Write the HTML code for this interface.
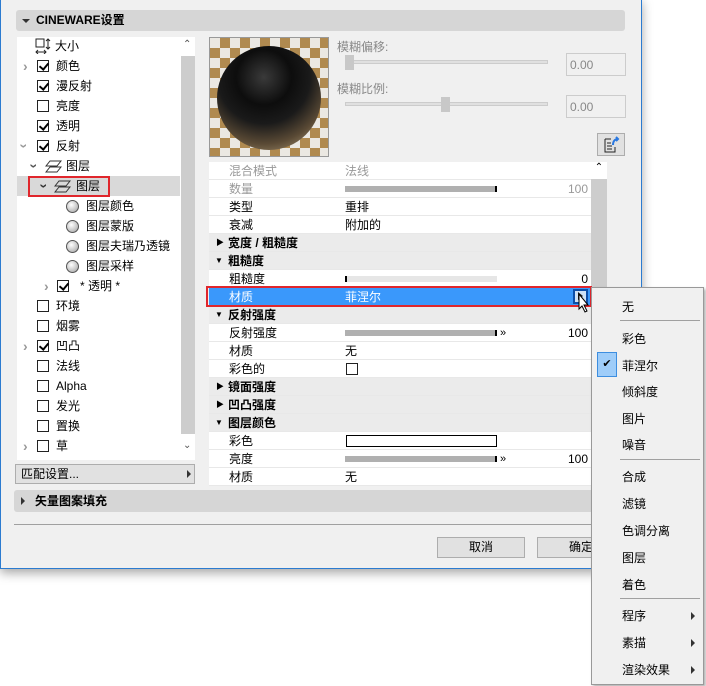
<!DOCTYPE html>
<html><head><meta charset="utf-8"><style>
*{box-sizing:border-box;margin:0;padding:0}
body{width:706px;height:686px;background:#fff;position:relative;overflow:hidden;font-family:"Liberation Sans","Noto Sans CJK SC",sans-serif;font-size:12px;color:#000}
.a{position:absolute}
.dlg{left:0;top:-2px;width:642px;height:571px;background:#f0f0f0;border:1px solid #2b7bd0;border-top:none;box-shadow:0 4px 10px rgba(0,0,0,.35)}
.bar{background:#d6d6d6;border-radius:3px;font-weight:bold;font-size:12px}
.tri{position:absolute;width:0;height:0}
.tree{left:17px;top:37px;width:163px;height:423px;background:#fff}
.vs{background:#cdcdcd}
.row{position:absolute;left:0;height:20px;line-height:20px;white-space:nowrap}
.cb{position:absolute;width:12px;height:12px;border:1px solid #222;background:#fff}
.cb.c::after{content:"";position:absolute;left:3px;top:0px;width:4px;height:7px;border:solid #000;border-width:0 2px 2px 0;transform:rotate(40deg)}
.rad{position:absolute;width:13px;height:13px;border-radius:50%;border:1px solid #555;background:radial-gradient(circle at 40% 35%,#fff,#bbb 70%,#888)}
.chev{position:absolute;color:#999;font-size:14px;font-weight:bold}
.pl{left:209px;top:162px;width:382px;height:323px;background:#fff}
.pr{position:absolute;left:0;width:382px;height:18px;line-height:18px;border-bottom:1px solid #e8e8e8}
.pr .k{position:absolute;left:20px}
.pr .v{position:absolute;left:136px}
.pr .n{position:absolute;right:3px}
.pr.h{background:#ebebeb;font-weight:bold}
.pr.h .k{left:19px}
.g{color:#999}
.sl{position:absolute;left:136px;top:6px;width:152px;height:6px;background:#b0b0b0;border-right:2px solid #000}
.sl.e{background:#e6e6e6;border-right:none;border-left:2px solid #000}
.btn{background:#e1e1e1;border:1px solid #adadad;text-align:center;line-height:19px}
.menu{left:591px;top:287px;width:113px;height:398px;background:#f0f0f0;border:1px solid #999;box-shadow:2px 2px 3px rgba(0,0,0,.3)}
.mi{position:absolute;left:30px;font-size:12px}
.sep{position:absolute;left:28px;width:80px;height:1px;background:#a0a0a0}
.arr{position:absolute;left:99px;width:0;height:0;border-left:4px solid #333;border-top:4px solid transparent;border-bottom:4px solid transparent}
</style></head><body>
<div class="a dlg"></div>
<div class="a bar" style="left:16px;top:10px;width:609px;height:21px;line-height:21px;padding-left:20px">CINEWARE设置</div>
<div class="tri a" style="left:22px;top:19px;border-top:4px solid #333;border-left:4px solid transparent;border-right:4px solid transparent"></div>
<div class="a tree">
 <div class="row" style="top:-1px;left:18px"><svg width="16" height="16" style="position:absolute;top:2px"><rect x="1" y="1" width="8" height="8" fill="none" stroke="#222"/><path d="M13 1v10M11 3l2-2 2 2M11 9l2 2 2-2M1 14h10M3 12l-2 2 2 2M9 12l2 2-2 2" stroke="#222" fill="none"/></svg><span style="position:absolute;left:20px">大小</span></div>
 <div class="row" style="top:19px;width:160px"><span class="chev" style="left:6px">›</span><span class="cb c" style="left:20px;top:4px"></span><span style="position:absolute;left:39px">颜色</span></div>
 <div class="row" style="top:39px"><span class="cb c" style="left:20px;top:4px"></span><span style="position:absolute;left:39px">漫反射</span></div>
 <div class="row" style="top:59px"><span class="cb" style="left:20px;top:4px"></span><span style="position:absolute;left:39px">亮度</span></div>
 <div class="row" style="top:79px"><span class="cb c" style="left:20px;top:4px"></span><span style="position:absolute;left:39px">透明</span></div>
 <div class="row" style="top:99px"><span class="chev" style="left:5px;transform:rotate(90deg)">›</span><span class="cb c" style="left:20px;top:4px"></span><span style="position:absolute;left:39px">反射</span></div>
 <div class="row" style="top:119px"><span class="chev" style="left:15px;transform:rotate(90deg);color:#555">›</span><svg class="a" style="left:28px;top:4px" width="17" height="13"><path d="M5 1h11L12 6H1zM5 7h11L12 12H1z" fill="none" stroke="#333"/></svg><span style="position:absolute;left:49px">图层</span></div>
 <div class="row" style="top:139px;width:163px;background:#d9d9d9"></div>
 <div class="a" style="left:11px;top:139px;width:82px;height:21px;border:2px solid #e0262c"></div>
 <div class="row" style="top:139px"><span class="chev" style="left:25px;transform:rotate(90deg);color:#333">›</span><svg class="a" style="left:37px;top:4px" width="17" height="13"><path d="M5 1h11L12 6H1zM5 7h11L12 12H1z" fill="none" stroke="#333"/></svg><span style="position:absolute;left:59px">图层</span></div>
 <div class="row" style="top:159px"><span class="rad" style="left:49px;top:4px"></span><span style="position:absolute;left:69px">图层颜色</span></div>
 <div class="row" style="top:179px"><span class="rad" style="left:49px;top:4px"></span><span style="position:absolute;left:69px">图层蒙版</span></div>
 <div class="row" style="top:199px"><span class="rad" style="left:49px;top:4px"></span><span style="position:absolute;left:69px">图层夫瑞乃透镜</span></div>
 <div class="row" style="top:219px"><span class="rad" style="left:49px;top:4px"></span><span style="position:absolute;left:69px">图层采样</span></div>
 <div class="row" style="top:239px"><span class="chev" style="left:27px">›</span><span class="cb c" style="left:40px;top:4px"></span><span style="position:absolute;left:63px">* 透明 *</span></div>
 <div class="row" style="top:259px"><span class="cb" style="left:20px;top:4px"></span><span style="position:absolute;left:39px">环境</span></div>
 <div class="row" style="top:279px"><span class="cb" style="left:20px;top:4px"></span><span style="position:absolute;left:39px">烟雾</span></div>
 <div class="row" style="top:299px"><span class="chev" style="left:6px">›</span><span class="cb c" style="left:20px;top:4px"></span><span style="position:absolute;left:39px">凹凸</span></div>
 <div class="row" style="top:319px"><span class="cb" style="left:20px;top:4px"></span><span style="position:absolute;left:39px">法线</span></div>
 <div class="row" style="top:339px"><span class="cb" style="left:20px;top:4px"></span><span style="position:absolute;left:39px">Alpha</span></div>
 <div class="row" style="top:359px"><span class="cb" style="left:20px;top:4px"></span><span style="position:absolute;left:39px">发光</span></div>
 <div class="row" style="top:379px"><span class="cb" style="left:20px;top:4px"></span><span style="position:absolute;left:39px">置换</span></div>
 <div class="row" style="top:399px"><span class="chev" style="left:6px">›</span><span class="cb" style="left:20px;top:4px"></span><span style="position:absolute;left:39px">草</span></div>
</div>
<div class="a vs" style="left:180px;top:37px;width:15px;height:423px;background:#fff"></div>
<div class="a vs" style="left:181px;top:56px;width:14px;height:378px"></div>
<div class="a" style="left:183px;top:39px;font-size:10px;color:#555">&#8963;</div>
<div class="a" style="left:183px;top:440px;font-size:10px;color:#555">&#8964;</div>
<div class="a btn" style="left:15px;top:464px;width:180px;height:20px;text-align:left;padding-left:5px;line-height:18px">匹配设置...</div>
<div class="arr a" style="left:187px;top:470px"></div>
<!-- preview -->
<div class="a" style="left:209px;top:37px;width:120px;height:120px;border:1px solid #999;background:repeating-conic-gradient(#b08a50 0 25%,#ebe8e2 0 50%) 0 0/20px 20px"></div>
<div class="a" style="left:217px;top:46px;width:104px;height:104px;border-radius:50%;background:radial-gradient(circle at 45% 30%,#3a3a3a 0,#0d0d0d 30%,#1a1a1a 50%,#5a4a35 72%,#9a8768 90%,#6e6455 100%)"></div>
<div class="a g" style="left:337px;top:38px;color:#888">模糊偏移:</div>
<div class="a" style="left:345px;top:60px;width:203px;height:4px;background:#e0e0e0;border:1px solid #ccc"></div>
<div class="a" style="left:345px;top:55px;width:9px;height:15px;background:#c8c8c8"></div>
<div class="a" style="left:566px;top:53px;width:60px;height:23px;border:1px solid #ccc;color:#888;padding:4px 3px">0.00</div>
<div class="a g" style="left:337px;top:80px;color:#888">模糊比例:</div>
<div class="a" style="left:345px;top:102px;width:203px;height:4px;background:#e0e0e0;border:1px solid #ccc"></div>
<div class="a" style="left:441px;top:97px;width:9px;height:15px;background:#c8c8c8"></div>
<div class="a" style="left:566px;top:95px;width:60px;height:23px;border:1px solid #ccc;color:#888;padding:4px 3px">0.00</div>
<div class="a btn" style="left:597px;top:133px;width:28px;height:23px"><svg width="20" height="18" viewBox="0 0 20 18" style="margin-top:2px"><path d="M4 3h6M4 3v13h10v-5M6 7h4M6 10h5M6 13h5" stroke="#222" fill="none"/><path d="M12 9c0-4 2-6 5-6M15 1l2 2-2 2" stroke="#2a78e0" stroke-width="2" fill="none"/></svg></div>
<div class="a pl">
 <div class="pr" style="top:0"><span class="k g">混合模式</span><span class="v g">法线</span></div>
 <div class="pr" style="top:18px"><span class="k g">数量</span><span class="sl"></span><span class="n g">100</span></div>
 <div class="pr" style="top:36px"><span class="k">类型</span><span class="v">重排</span></div>
 <div class="pr" style="top:54px"><span class="k">衰减</span><span class="v">附加的</span></div>
 <div class="pr h" style="top:72px"><span style="position:absolute;left:7px;font-size:8px">▶</span><span class="k">宽度 / 粗糙度</span></div>
 <div class="pr h" style="top:90px"><span style="position:absolute;left:6px;font-size:8px">▼</span><span class="k">粗糙度</span></div>
 <div class="pr" style="top:108px"><span class="k">粗糙度</span><span class="sl e"></span><span class="n">0</span></div>
 <div class="pr" style="top:126px;background:#3a98fb;color:#fff"><span class="k">材质</span><span class="v">菲涅尔</span><span style="position:absolute;left:364px;top:1px;width:15px;height:15px;border:2px solid #0d4fa8;background:#cfe2f7"></span><span style="position:absolute;left:369px;top:4px;border-left:5px solid #222;border-top:4px solid transparent;border-bottom:4px solid transparent"></span></div>
 <div class="pr h" style="top:144px"><span style="position:absolute;left:6px;font-size:8px">▼</span><span class="k">反射强度</span></div>
 <div class="pr" style="top:162px"><span class="k">反射强度</span><span class="sl"></span><span class="a" style="left:291px;top:0;font-size:11px">»</span><span class="n">100</span></div>
 <div class="pr" style="top:180px"><span class="k">材质</span><span class="v">无</span></div>
 <div class="pr" style="top:198px"><span class="k">彩色的</span><span class="cb" style="left:137px;top:3px"></span></div>
 <div class="pr h" style="top:216px"><span style="position:absolute;left:7px;font-size:8px">▶</span><span class="k">镜面强度</span></div>
 <div class="pr h" style="top:234px"><span style="position:absolute;left:7px;font-size:8px">▶</span><span class="k">凹凸强度</span></div>
 <div class="pr h" style="top:252px"><span style="position:absolute;left:6px;font-size:8px">▼</span><span class="k">图层颜色</span></div>
 <div class="pr" style="top:270px"><span class="k">彩色</span><span style="position:absolute;left:137px;top:3px;width:151px;height:12px;border:1px solid #000"></span></div>
 <div class="pr" style="top:288px"><span class="k">亮度</span><span class="sl"></span><span class="a" style="left:291px;top:0;font-size:11px">»</span><span class="n">100</span></div>
 <div class="pr" style="top:306px"><span class="k">材质</span><span class="v">无</span></div>
</div>
<div class="a" style="left:591px;top:162px;width:16px;height:323px;background:#cdcdcd"></div>
<div class="a" style="left:591px;top:162px;width:16px;height:17px;background:#fff;font-size:10px;text-align:center">&#8963;</div>
<div class="a" style="left:206px;top:286px;width:386px;height:21px;border:2px solid #e0262c"></div>
<div class="a bar" style="left:14px;top:490px;width:611px;height:22px;line-height:22px;padding-left:21px">矢量图案填充</div>
<div class="tri a" style="left:21px;top:497px;border-left:4px solid #333;border-top:4px solid transparent;border-bottom:4px solid transparent"></div>
<div class="a" style="left:14px;top:524px;width:611px;height:1px;background:#a0a0a0"></div>
<div class="a btn" style="left:437px;top:537px;width:88px;height:21px">取消</div>
<div class="a btn" style="left:537px;top:537px;width:88px;height:21px">确定</div>
<div class="a menu">
 <div class="mi" style="top:10px">无</div><div class="sep" style="top:32px"></div>
 <div class="mi" style="top:42px">彩色</div>
 <div class="a" style="left:5px;top:64px;width:20px;height:25px;background:#9fcdf9;border:1px solid #3d8ee0;text-align:center;line-height:23px;font-size:11px">✔</div>
 <div class="mi" style="top:69px">菲涅尔</div>
 <div class="mi" style="top:95px">倾斜度</div>
 <div class="mi" style="top:122px">图片</div>
 <div class="mi" style="top:148px">噪音</div><div class="sep" style="top:171px"></div>
 <div class="mi" style="top:180px">合成</div>
 <div class="mi" style="top:207px">滤镜</div>
 <div class="mi" style="top:234px">色调分离</div>
 <div class="mi" style="top:261px">图层</div>
 <div class="mi" style="top:288px">着色</div><div class="sep" style="top:310px"></div>
 <div class="mi" style="top:319px">程序</div><div class="arr" style="top:324px"></div>
 <div class="mi" style="top:346px">素描</div><div class="arr" style="top:351px"></div>
 <div class="mi" style="top:373px">渲染效果</div><div class="arr" style="top:378px"></div>
</div>
<svg class="a" style="left:577px;top:292px" width="14" height="22" viewBox="0 0 14 22"><path d="M2 2v15l3-3 3 6 2-1-3-6h4z" fill="#fff" stroke="#000"/></svg>
</body></html>
